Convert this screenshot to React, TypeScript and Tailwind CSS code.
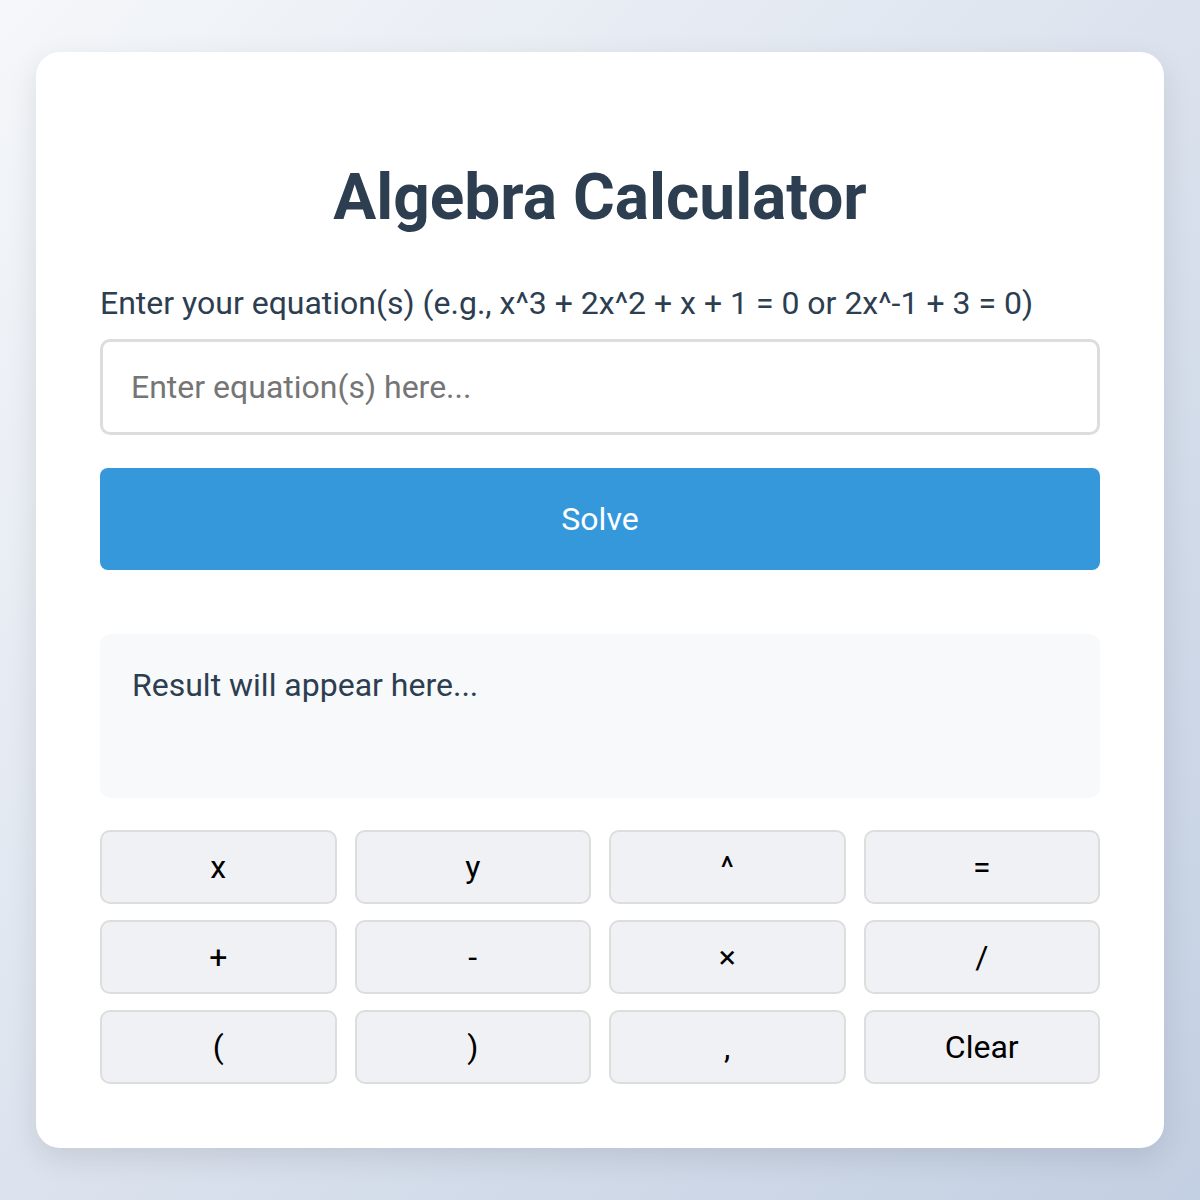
import { useState } from "react";

const keys = ["x", "y", "^", "=", "+", "-", "×", "/", "(", ")", ",", "Clear"];

export default function App() {
  const [equation, setEquation] = useState("");
  const [result, setResult] = useState("Result will appear here...");

  const press = (key: string) => {
    if (key === "Clear") {
      setEquation("");
      setResult("Result will appear here...");
      return;
    }
    setEquation((prev) => prev + (key === "×" ? "*" : key));
  };

  return (
    <div
      className="flex min-h-screen items-center justify-center bg-gradient-to-br from-[#f5f7fa] to-[#c3cfe2] px-[36px]"
      style={{ fontFamily: "Roboto, 'Liberation Sans', sans-serif" }}
    >
      <div className="w-full rounded-[24px] bg-white px-[64px] pb-[64px] pt-[108px] shadow-[0_10px_30px_rgba(0,0,0,0.1)]">
        <h1 className="mb-[47px] text-center text-[64px] font-bold leading-[1.2] text-[#2c3e50]">Algebra Calculator</h1>
        <label className="mb-[16px] block text-[32px] leading-[1.2] text-[#2c3e50]">
          Enter your equation(s) (e.g., x^3 + 2x^2 + x + 1 = 0 or 2x^-1 + 3 = 0)
        </label>
        <input
          value={equation}
          onChange={(e) => setEquation(e.target.value)}
          placeholder="Enter equation(s) here..."
          className="block h-[96px] w-full rounded-[10px] border-[3px] border-[#ddd] px-[28px] text-[32px] text-[#2c3e50] outline-none placeholder:text-[#757575]"
        />
        <button
          onClick={() => setResult(equation ? `Solving: ${equation}` : "Result will appear here...")}
          className="mt-[33px] block h-[102px] w-full rounded-[8px] bg-[#3498db] text-[32px] text-white"
        >
          Solve
        </button>
        <div className="mt-[64px] h-[164px] rounded-[10px] bg-[#f8f9fb] px-[32px] py-[32px] text-[32px] leading-[1.2] text-[#2c3e50]">
          {result}
        </div>
        <div className="mt-[32px] grid grid-cols-4 gap-x-[18px] gap-y-[16px]">
          {keys.map((key) => (
            <button
              key={key}
              onClick={() => press(key)}
              className="h-[74px] rounded-[10px] border-2 border-[#ddd] bg-[#f0f1f4] text-[32px] text-black"
            >
              {key}
            </button>
          ))}
        </div>
      </div>
    </div>
  );
}
